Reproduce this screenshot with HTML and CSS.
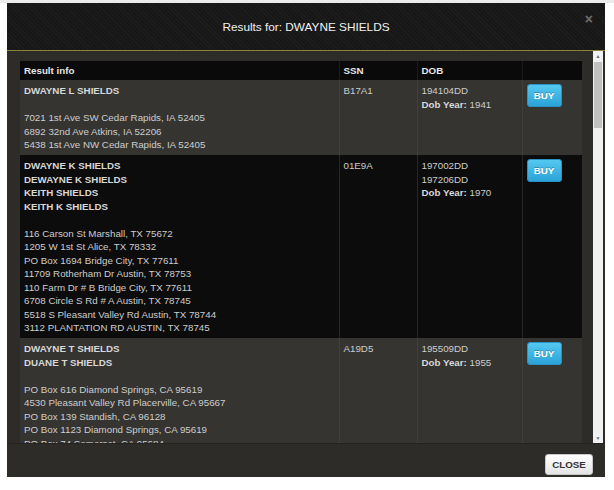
FILE: index.html
```html
<!DOCTYPE html>
<html>
<head>
<meta charset="utf-8">
<link rel="stylesheet" href="styles.css">
</head>
<body>
<div class="page-strip"></div>
<div class="modal">
  <div class="modal-header">
    <div></div>
    <h1 class="title">Results for: DWAYNE SHIELDS</h1>
    <span class="close-x">&times;</span>
  </div>
  <div class="modal-body">
    <div class="scroll-area">
      <table class="results">
        <colgroup>
          <col class="c-info"><col class="c-ssn"><col class="c-dob"><col class="c-buy">
        </colgroup>
        <thead>
          <tr><th>Result info</th><th>SSN</th><th>DOB</th><th></th></tr>
        </thead>
        <tbody>
          <tr class="gray">
            <td><b>DWAYNE L SHIELDS</b><br><br>7021 1st Ave SW Cedar Rapids, IA 52405<br>6892 32nd Ave Atkins, IA 52206<br>5438 1st Ave NW Cedar Rapids, IA 52405</td>
            <td>B17A1</td>
            <td>194104DD<br><b>Dob Year:</b> 1941</td>
            <td><button class="buy">BUY</button></td>
          </tr>
          <tr class="black">
            <td><b>DWAYNE K SHIELDS<br>DEWAYNE K SHIELDS<br>KEITH SHIELDS<br>KEITH K SHIELDS</b><br><br>116 Carson St Marshall, TX 75672<br>1205 W 1st St Alice, TX 78332<br>PO Box 1694 Bridge City, TX 77611<br>11709 Rotherham Dr Austin, TX 78753<br>110 Farm Dr # B Bridge City, TX 77611<br>6708 Circle S Rd # A Austin, TX 78745<br>5518 S Pleasant Valley Rd Austin, TX 78744<br>3112 PLANTATION RD AUSTIN, TX 78745</td>
            <td>01E9A</td>
            <td>197002DD<br>197206DD<br><b>Dob Year:</b> 1970</td>
            <td><button class="buy">BUY</button></td>
          </tr>
          <tr class="gray">
            <td><b>DWAYNE T SHIELDS<br>DUANE T SHIELDS</b><br><br>PO Box 616 Diamond Springs, CA 95619<br>4530 Pleasant Valley Rd Placerville, CA 95667<br>PO Box 139 Standish, CA 96128<br>PO Box 1123 Diamond Springs, CA 95619<br>PO Box 74 Somerset, CA 95684</td>
            <td>A19D5</td>
            <td>195509DD<br><b>Dob Year:</b> 1955</td>
            <td><button class="buy">BUY</button></td>
          </tr>
        </tbody>
      </table>
    </div>
    <div class="scrollbar">
      <span class="sb-arrow">&#9650;</span>
      <span class="sb-thumb"></span>
      <span class="sb-track"></span>
      <span class="sb-arrow">&#9660;</span>
    </div>
  </div>
  <div class="modal-footer">
    <button class="close-btn">CLOSE</button>
  </div>
</div>
</body>
</html>
```

FILE: styles.css
```css
html, body {
  margin: 0;
  padding: 0;
  background: #ffffff;
  font-family: "Liberation Sans", Arial, sans-serif;
}

.page-strip {
  height: 3px;
  background: #ececec;
}

.modal {
  margin-left: 7px;
  width: 598px;
  height: 474px;
  display: flex;
  flex-direction: column;
  background: #2d2c29;
}

.modal-header {
  height: 47px;
  flex: none;
  display: grid;
  grid-template-columns: 1fr auto 1fr;
  align-items: center;
  border-bottom: 1px solid #8d8236;
  background: repeating-linear-gradient(45deg, #1d1d1d 0 1px, #171717 1px 3px);
}

.title {
  margin: 0;
  font-size: 11.8px;
  font-weight: normal;
  color: #f0f0f0;
}

.close-x {
  justify-self: end;
  align-self: start;
  margin: 9px 12px 0 0;
  font-size: 14px;
  line-height: 14px;
  font-weight: bold;
  color: #6e6e6e;
}

.modal-body {
  height: 392px;
  flex: none;
  display: flex;
  background: #2d2c29;
}

.scroll-area {
  flex: 1;
  overflow: hidden;
  padding: 10px 11px 0 13px;
}

.results {
  width: 562px;
  border-collapse: collapse;
  table-layout: fixed;
  font-size: 9.75px;
  line-height: 13.5px;
  color: #cdcdcd;
}

.c-info { width: 319px; }
.c-ssn { width: 78px; }
.c-dob { width: 105px; }
.c-buy { width: 60px; }

.results th {
  background: #0a0a0a;
  color: #e6e6e6;
  font-weight: bold;
  text-align: left;
  padding: 3px 4px 2.5px;
  height: 13.5px;
}

.results td {
  padding: 4px 4px 3.5px;
  vertical-align: top;
  white-space: nowrap;
}

.results td b {
  color: #d8d8d8;
}

.results td + td {
  border-left: 1px solid #403f3b;
}

.results th + th {
  border-left: 1px solid #1c1c1c;
}

.gray td {
  background: #353431;
}

.black td {
  background: #0c0c0c;
}

.black td + td {
  border-left: 1px solid #262626;
}

.buy {
  display: block;
  width: 35px;
  height: 23px;
  padding: 0;
  border: 1px solid #2a93c6;
  border-radius: 3px;
  background: linear-gradient(#55c8f0, #2ba3d8);
  color: #ffffff;
  font-family: "Liberation Sans", Arial, sans-serif;
  font-size: 9.75px;
  font-weight: bold;
  text-shadow: 0 -1px 0 rgba(0, 0, 0, 0.25);
}

.scrollbar {
  width: 10px;
  margin-right: 2px;
  flex: none;
  display: flex;
  flex-direction: column;
  background: #f1f1f1;
}

.sb-arrow {
  height: 10px;
  font-size: 5px;
  line-height: 10px;
  text-align: center;
  color: #6a6a6a;
}

.sb-thumb {
  height: 66px;
  margin: 1px 1px 0;
  background: #c1c1c1;
}

.sb-track {
  flex: 1;
}

.modal-footer {
  flex: 1;
  display: flex;
  justify-content: flex-end;
  align-items: flex-start;
  padding: 10px 12px 0 0;
  border-top: 1px solid #242321;
  background: #2d2c29;
}

.close-btn {
  width: 48px;
  height: 21px;
  padding: 0;
  border: 1px solid #c8c8c8;
  border-radius: 3px;
  background: linear-gradient(#ffffff, #e4e4e4);
  color: #333333;
  font-family: "Liberation Sans", Arial, sans-serif;
  font-size: 9.75px;
  font-weight: bold;
}
```
